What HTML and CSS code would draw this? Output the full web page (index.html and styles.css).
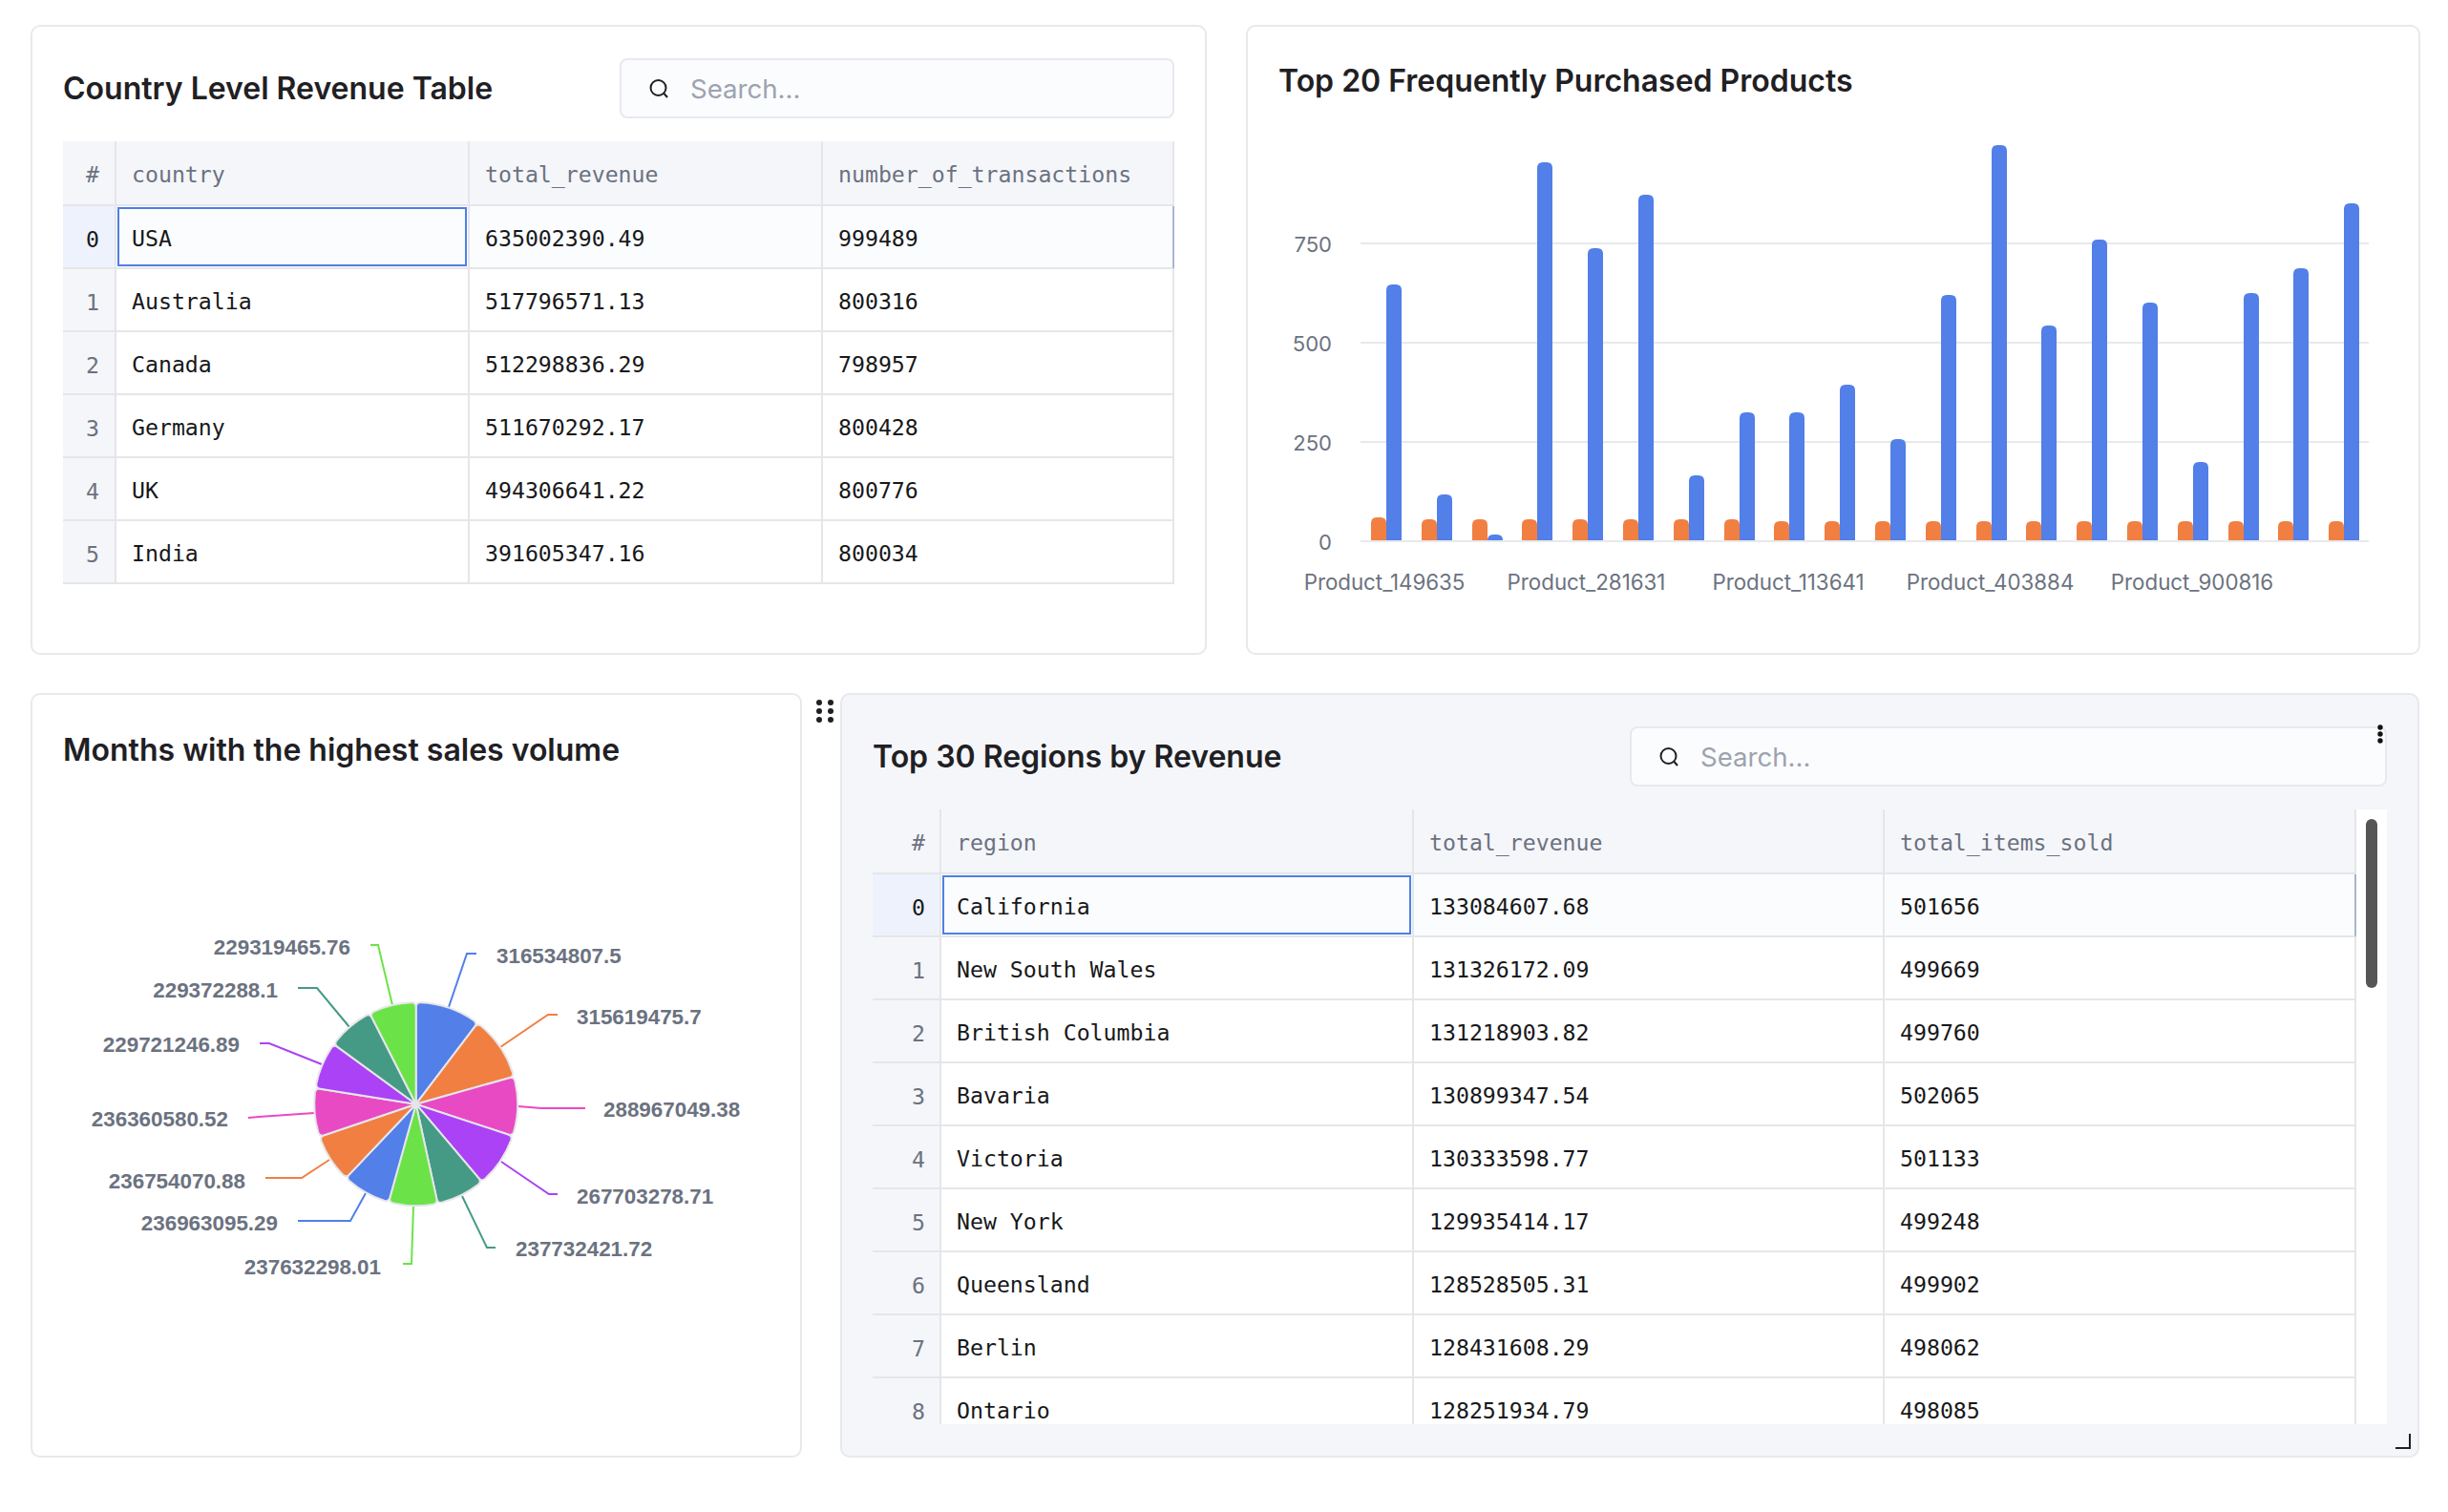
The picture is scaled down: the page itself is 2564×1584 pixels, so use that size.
FILE: index.html
```html
<!DOCTYPE html>
<html lang="en">
<head>
    <meta charset="utf-8">
    <title>Sales Dashboard</title>
    <link rel="stylesheet" href="styles.css">
    <script src="chart.js"></script>
</head>
<body onload="drawCharts()">
    <div class="row row-top">
        <section class="card card-country">
            <div class="card-head">
                <h2>Country Level Revenue Table</h2>
                <div class="search search-small">
                    <svg class="search-icon" viewBox="0 0 22 22"><circle cx="10.5" cy="10" r="8"/><path d="M16.5 16l3.5 4"/></svg>
                    <span>Search...</span>
                </div>
            </div>
            <table class="grid grid-country">
                <thead>
                    <tr><th class="idx">#</th><th>country</th><th>total_revenue</th><th>number_of_transactions</th></tr>
                </thead>
                <tbody>
                    <tr class="selected"><td class="idx">0</td><td class="focus">USA</td><td>635002390.49</td><td class="last">999489</td></tr>
                    <tr><td class="idx">1</td><td>Australia</td><td>517796571.13</td><td>800316</td></tr>
                    <tr><td class="idx">2</td><td>Canada</td><td>512298836.29</td><td>798957</td></tr>
                    <tr><td class="idx">3</td><td>Germany</td><td>511670292.17</td><td>800428</td></tr>
                    <tr><td class="idx">4</td><td>UK</td><td>494306641.22</td><td>800776</td></tr>
                    <tr><td class="idx">5</td><td>India</td><td>391605347.16</td><td>800034</td></tr>
                </tbody>
            </table>
        </section>

        <section class="card card-products">
            <h2 class="products-title">Top 20 Frequently Purchased Products</h2>
            <svg id="barChart" class="bar-chart" viewBox="1339 107 1160 533"></svg>
        </section>
    </div>

    <div class="row row-bottom">
        <section class="card card-months">
            <h2 class="months-title">Months with the highest sales volume</h2>
            <svg id="pieChart" class="pie-chart" viewBox="66 808 739 650"></svg>
        </section>

        <section class="card card-regions">
            <svg class="drag-handle" viewBox="0 0 18 24">
                <circle cx="3" cy="3" r="3"/><circle cx="15" cy="3" r="3"/>
                <circle cx="3" cy="12" r="3"/><circle cx="15" cy="12" r="3"/>
                <circle cx="3" cy="21" r="3"/><circle cx="15" cy="21" r="3"/>
            </svg>
            <svg class="kebab" viewBox="0 0 6 20">
                <circle cx="3" cy="3" r="2.7"/><circle cx="3" cy="10" r="2.7"/><circle cx="3" cy="17" r="2.7"/>
            </svg>
            <div class="card-head">
                <h2 class="regions-title">Top 30 Regions by Revenue</h2>
                <div class="search search-wide">
                    <svg class="search-icon" viewBox="0 0 22 22"><circle cx="10.5" cy="10" r="8"/><path d="M16.5 16l3.5 4"/></svg>
                    <span>Search...</span>
                </div>
            </div>
            <div class="scroll-box">
                <table class="grid grid-regions">
                    <thead>
                        <tr><th class="idx">#</th><th>region</th><th>total_revenue</th><th>total_items_sold</th></tr>
                    </thead>
                    <tbody>
                        <tr class="selected"><td class="idx">0</td><td class="focus">California</td><td>133084607.68</td><td class="last">501656</td></tr>
                        <tr><td class="idx">1</td><td>New South Wales</td><td>131326172.09</td><td>499669</td></tr>
                        <tr><td class="idx">2</td><td>British Columbia</td><td>131218903.82</td><td>499760</td></tr>
                        <tr><td class="idx">3</td><td>Bavaria</td><td>130899347.54</td><td>502065</td></tr>
                        <tr><td class="idx">4</td><td>Victoria</td><td>130333598.77</td><td>501133</td></tr>
                        <tr><td class="idx">5</td><td>New York</td><td>129935414.17</td><td>499248</td></tr>
                        <tr><td class="idx">6</td><td>Queensland</td><td>128528505.31</td><td>499902</td></tr>
                        <tr><td class="idx">7</td><td>Berlin</td><td>128431608.29</td><td>498062</td></tr>
                        <tr><td class="idx">8</td><td>Ontario</td><td>128251934.79</td><td>498085</td></tr>
                    </tbody>
                </table>
                <div class="scroll-gutter"><div class="scroll-thumb"></div></div>
            </div>
            <div class="resize-handle"></div>
        </section>
    </div>
</body>
</html>
```

FILE: styles.css
```css
* {
    box-sizing: border-box;
}
body {
    font-family: 'Inter', sans-serif;
    background-color: white;
    margin: 0;
    padding: 26px 29px 0 32px;
    width: 2564px;
    height: 1584px;
    overflow: hidden;
}
h2 {
    margin: 0;
    font-size: 32px;
    font-weight: 600;
    line-height: 44px;
    color: #1f2023;
}
.row {
    display: flex;
}
.row-top {
    gap: 41px;
    height: 660px;
    margin-bottom: 40px;
}
.row-bottom {
    gap: 40px;
    height: 801px;
}
.card {
    position: relative;
    background: white;
    border: 2px solid #e8e9ec;
    border-radius: 10px;
    padding: 33px 32px;
}
.card-country {
    width: 1232px;
}
.card-products {
    width: 1230px;
}
.card-months {
    width: 808px;
}
.card-regions {
    width: 1654px;
    background: #f5f6fa;
}
.card-head {
    display: flex;
    justify-content: space-between;
    align-items: center;
    height: 63px;
    margin-bottom: 24px;
}
.products-title {
    margin-top: 2px;
}
.months-title {
    margin-top: 3px;
}
.regions-title {
    padding-top: 1px;
}

.search {
    display: flex;
    align-items: center;
    height: 63px;
    background: #fbfcfe;
    border: 2px solid #e8e9ec;
    border-radius: 8px;
    padding-left: 28px;
    font-size: 27.6px;
    color: #9ca3af;
}
.search-small {
    width: 581px;
}
.search-wide {
    width: 793px;
}
.search-icon {
    width: 22px;
    height: 22px;
    margin-right: 22px;
    fill: none;
    stroke: #1f2023;
    stroke-width: 2;
}

.grid {
    border-spacing: 0;
    table-layout: fixed;
    font-family: 'DejaVu Sans Mono', monospace;
    font-size: 23.2px;
    color: #17181a;
}
.grid-country {
    width: 1164px;
}
.grid-country th:nth-child(1) { width: 56px; }
.grid-country th:nth-child(2) { width: 370px; }
.grid-country th:nth-child(3) { width: 370px; }
.grid-regions {
    width: 1554px;
    flex: none;
}
.grid-regions th:nth-child(1) { width: 72px; }
.grid-regions th:nth-child(2) { width: 495px; }
.grid-regions th:nth-child(3) { width: 493px; }
.grid th {
    height: 68px;
    background: #f5f6fa;
    color: #6b7280;
    font-weight: 400;
    text-align: left;
    padding: 2px 16px 0;
    border-right: 2px solid #e5e6e9;
    border-bottom: 2px solid #e5e6e9;
}
.grid td {
    height: 66px;
    background: white;
    padding: 3px 16px 0;
    border-right: 2px solid #e5e6e9;
    border-bottom: 2px solid #e5e6e9;
}
.grid .idx {
    background: #f5f6fa;
    color: #6b7280;
    text-align: right;
    padding: 5px 16px 0 0;
}
.grid th.idx {
    padding-top: 2px;
}
.grid-regions .idx {
    padding-right: 15px;
}
.selected td {
    background: #fbfcfe;
}
.grid .selected .idx {
    background: #edf2fd;
    color: #17181a;
}
.grid .last {
    border-right-color: #a9b5d2;
}
.focus {
    position: relative;
}
.focus::after {
    content: "";
    position: absolute;
    top: 1px;
    left: 1px;
    right: 1px;
    bottom: 1px;
    border: 2px solid #4f7fe6;
}

.scroll-box {
    display: flex;
    height: 644px;
    overflow: hidden;
}
.scroll-box .grid {
    align-self: flex-start;
}
.scroll-gutter {
    width: 32px;
    flex: none;
    background: white;
    padding: 10px 0 0 10px;
}
.scroll-thumb {
    width: 12px;
    height: 177px;
    background: #555;
    border-radius: 6px;
}
.card-regions .grid td:last-child,
.card-regions .grid th:last-child {
    padding-right: 0;
}

.drag-handle {
    position: absolute;
    left: -27px;
    top: 5px;
    width: 18px;
    height: 24px;
    fill: #1f2023;
}
.kebab {
    position: absolute;
    right: 36px;
    top: 31px;
    width: 6px;
    height: 20px;
    fill: #111;
}
.resize-handle {
    position: absolute;
    right: 7px;
    bottom: 7px;
    width: 16px;
    height: 16px;
    border-right: 2px solid #1f2023;
    border-bottom: 2px solid #1f2023;
}

.bar-chart {
    display: block;
    width: 1160px;
    height: 533px;
}
.pie-chart {
    display: block;
    width: 739px;
    height: 650px;
}
.axis-label {
    font-family: 'Inter', sans-serif;
    font-size: 22px;
    fill: #6b7280;
}
.x-label {
    font-size: 22.3px;
}
.pie-label {
    font-family: 'Liberation Sans', sans-serif;
    font-size: 22.4px;
    font-weight: 700;
    fill: #6b7280;
}
```

FILE: chart.js
```js
var SVG_NS = 'http://www.w3.org/2000/svg';
var BLUE = '#527fe8', ORANGE = '#f17f42';

function add(parent, tag, attrs, text) {
    var el = document.createElementNS(SVG_NS, tag);
    for (var k in attrs) el.setAttribute(k, attrs[k]);
    if (text) el.textContent = text;
    parent.appendChild(el);
    return el;
}

function topRoundedBar(x, top, w, base) {
    var r = Math.min(6, base - top);
    return 'M' + x + ' ' + base + 'V' + (top + r) +
        'Q' + x + ' ' + top + ' ' + (x + r) + ' ' + top +
        'H' + (x + w - r) +
        'Q' + (x + w) + ' ' + top + ' ' + (x + w) + ' ' + (top + r) +
        'V' + base + 'Z';
}

function drawBars() {
    var svg = document.getElementById('barChart');
    var ticks = [[255, '750'], [359, '500'], [463, '250'], [567, '0']];
    ticks.forEach(function (t) {
        add(svg, 'line', { x1: 1425, x2: 2481, y1: t[0], y2: t[0], stroke: '#e8e9ec', 'stroke-width': 2 });
        add(svg, 'text', { x: 1395, y: t[0] + 3, 'text-anchor': 'end', 'dominant-baseline': 'middle', 'class': 'axis-label' }, t[1]);
    });

    var blueTops = [298, 518, 560, 170, 260, 204, 498, 432, 432, 403, 460, 309, 152, 341, 251, 317, 484, 307, 281, 213];
    blueTops.forEach(function (top, i) {
        var x = Math.round(1436 + 52.8 * i);
        var orangeTop = i === 0 ? 542 : (i < 8 ? 544 : 546);
        add(svg, 'path', { d: topRoundedBar(x, orangeTop, 16, 566), fill: ORANGE });
        add(svg, 'path', { d: topRoundedBar(x + 16, top, 16, 566), fill: BLUE });
    });

    var names = ['Product_149635', 'Product_281631', 'Product_113641', 'Product_403884', 'Product_900816'];
    names.forEach(function (name, i) {
        add(svg, 'text', { x: 1450 + 211.5 * i, y: 612, 'text-anchor': 'middle', 'dominant-baseline': 'middle', 'class': 'axis-label x-label' }, name);
    });
}

function polar(cx, cy, r, a) {
    return (cx + r * Math.sin(a)).toFixed(2) + ' ' + (cy - r * Math.cos(a)).toFixed(2);
}

function roundedWedge(cx, cy, R, a0, a1) {
    var c = 5, da = c / R;
    return 'M' + cx + ' ' + cy +
        'L' + polar(cx, cy, R - c, a0) +
        'Q' + polar(cx, cy, R, a0) + ' ' + polar(cx, cy, R, a0 + da) +
        'A' + R + ' ' + R + ' 0 0 1 ' + polar(cx, cy, R, a1 - da) +
        'Q' + polar(cx, cy, R, a1) + ' ' + polar(cx, cy, R - c, a1) + 'Z';
}

function drawPie() {
    var svg = document.getElementById('pieChart');
    var colors = [BLUE, ORANGE, '#e84ac4', '#ab42f5', '#459a85', '#6be348'];
    // value, leader line, label x, label y, anchor
    var slices = [
        ['316534807.5', '470,1055 489,999 499,999', 520, 1003, 'start'],
        ['315619475.7', '524,1097 574,1063 584,1063', 604, 1067, 'start'],
        ['288967049.38', '543,1159 567,1161 613,1161', 632, 1164, 'start'],
        ['267703278.71', '525,1217 575,1251 584,1251', 604, 1255, 'start'],
        ['237732421.72', '484,1253 510,1307 519,1307', 540, 1310, 'start'],
        ['237632298.01', '433,1264 431,1324 422,1324', 399, 1329, 'end'],
        ['236963095.29', '383,1250 367,1279 312,1279', 291, 1283, 'end'],
        ['236754070.88', '345,1215 316,1234 278,1234', 257, 1239, 'end'],
        ['236360580.52', '329,1166 271,1170 260,1171', 239, 1174, 'end'],
        ['229721246.89', '337,1115 282,1093 272,1093', 251, 1096, 'end'],
        ['229372288.1', '366,1076 332,1035 312,1035', 291, 1039, 'end'],
        ['229319465.76', '411,1053 396,990 388,990', 367, 994, 'end']
    ];
    var total = slices.reduce(function (s, d) { return s + parseFloat(d[0]); }, 0);
    var cx = 435.7, cy = 1156.7, R = 106.5, angle = 0;

    slices.forEach(function (d, i) {
        add(svg, 'polyline', { points: d[1], fill: 'none', stroke: colors[i % 6], 'stroke-width': 2 });
        add(svg, 'text', { x: d[2], y: d[3], 'text-anchor': d[4], 'dominant-baseline': 'middle', 'class': 'pie-label' }, d[0]);
    });
    slices.forEach(function (d, i) {
        var next = angle + parseFloat(d[0]) / total * Math.PI * 2;
        add(svg, 'path', {
            d: roundedWedge(cx, cy, R, angle, next),
            fill: colors[i % 6],
            stroke: '#e5e6e9',
            'stroke-width': 2,
            'stroke-linejoin': 'round'
        });
        angle = next;
    });
}

function drawCharts() {
    drawBars();
    drawPie();
}
```
